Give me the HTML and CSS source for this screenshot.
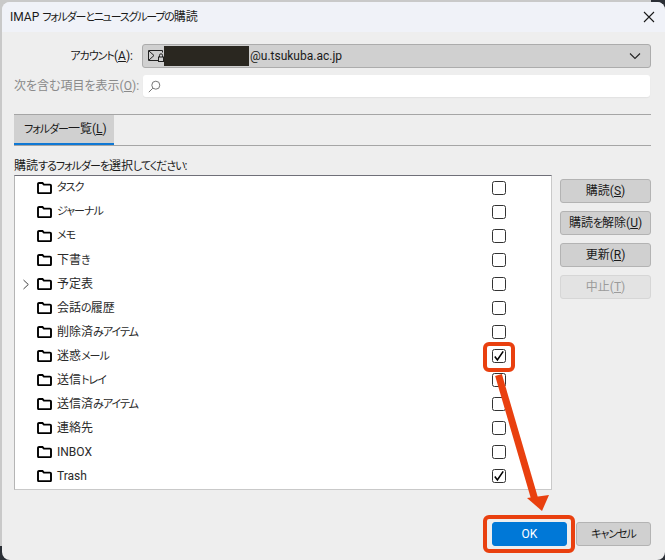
FILE: index.html
```html
<!DOCTYPE html>
<html lang="ja">
<head>
<meta charset="utf-8">
<title>IMAP フォルダーとニュースグループの購読</title>
<link rel="stylesheet" href="styles.css">
</head>
<body>
<svg class="defs" width="0" height="0">
  <symbol id="folder" viewBox="0 0 15 12"><path d="M1 10.200V2a1 1 0 0 1 1-1h3.500l1.400 1.600H13a1 1 0 0 1 1 1v6.600a1 1 0 0 1-1 1H2a1 1 0 0 1-1-1z" fill="none" stroke="#000" stroke-width="1.900"/></symbol>
  <symbol id="tick" viewBox="0 0 12 12"><path d="M1.800 6.600L4.400 10L10.200 1.400" stroke="#000" stroke-width="1.600" fill="none"/></symbol>
</svg>
<div class="corner corner-tr"></div>
<div class="corner corner-bl"></div>
<div class="corner corner-br"></div>
<div class="dialog">
  <header class="titlebar">
    <span class="title">IMAP <span class="k">フォルダーとニュースグループの</span>購読</span>
    <svg class="close" width="12" height="12" viewBox="0 0 12 12"><path d="M1 1L11 11M11 1L1 11" stroke="#1a1a1a" stroke-width="1.100" fill="none"/></svg>
  </header>
  <main class="content">
    <div class="field account-row">
      <label class="field-label"><span class="k">アカウント</span>(<u>A</u>):</label>
      <div class="combo">
        <svg class="acct-icon" width="16" height="14" viewBox="0 0 16 14"><path d="M.5 1.500h14v2M10 11.500H.5v-10M1 2l5 4.500L1 11" stroke="#222" fill="none"/><rect x="10.500" y="8" width="5" height="4.500" fill="none" stroke="#222"/><path d="M11.500 8V6.300a1.500 1.500 0 0 1 3 0V8" stroke="#222" fill="none"/></svg>
        <span class="redact"></span>
        <span class="combo-text">@u.tsukuba.ac.jp</span>
        <svg class="chev" width="12" height="8" viewBox="0 0 12 8"><path d="M1 1.500L6 6.500L11 1.500" stroke="#222" stroke-width="1.100" fill="none"/></svg>
      </div>
    </div>
    <div class="field filter-row">
      <label class="field-label muted">次を含む項目を表示(<u>O</u>):</label>
      <div class="search">
        <svg width="13" height="13" viewBox="0 0 13 13"><circle cx="7.800" cy="5.200" r="4" stroke="#777" fill="none"/><path d="M4.800 8.200L.8 12.200" stroke="#777" fill="none"/></svg>
      </div>
    </div>
    <div class="tabs"><div class="tab"><span class="k">フォルダー</span>一覧(<u>L</u>)</div></div>
    <p class="prompt">購読<span class="k">するフォルダーを</span>選択<span class="k">してください</span>:</p>
    <div class="panes">
      <div class="list">
        <div class="row"><span class="twisty"></span><svg class="folder"><use href="#folder"/></svg><span class="name k">タスク</span><span class="check"></span></div>
        <div class="row"><span class="twisty"></span><svg class="folder"><use href="#folder"/></svg><span class="name k">ジャーナル</span><span class="check"></span></div>
        <div class="row"><span class="twisty"></span><svg class="folder"><use href="#folder"/></svg><span class="name k">メモ</span><span class="check"></span></div>
        <div class="row"><span class="twisty"></span><svg class="folder"><use href="#folder"/></svg><span class="name">下書<span class="k">き</span></span><span class="check"></span></div>
        <div class="row"><span class="twisty"><svg width="8" height="11" viewBox="0 0 8 11"><path d="M1.500 1L6.300 5.500L1.500 10" stroke="#444" fill="none"/></svg></span><svg class="folder"><use href="#folder"/></svg><span class="name">予定表</span><span class="check"></span></div>
        <div class="row"><span class="twisty"></span><svg class="folder"><use href="#folder"/></svg><span class="name">会話<span class="k">の</span>履歴</span><span class="check"></span></div>
        <div class="row"><span class="twisty"></span><svg class="folder"><use href="#folder"/></svg><span class="name">削除済<span class="k">みアイテム</span></span><span class="check"></span></div>
        <div class="row"><span class="twisty"></span><svg class="folder"><use href="#folder"/></svg><span class="name">迷惑<span class="k">メール</span></span><span class="check"><svg width="12" height="12"><use href="#tick"/></svg></span></div>
        <div class="row"><span class="twisty"></span><svg class="folder"><use href="#folder"/></svg><span class="name">送信<span class="k">トレイ</span></span><span class="check"></span></div>
        <div class="row"><span class="twisty"></span><svg class="folder"><use href="#folder"/></svg><span class="name">送信済<span class="k">みアイテム</span></span><span class="check"></span></div>
        <div class="row"><span class="twisty"></span><svg class="folder"><use href="#folder"/></svg><span class="name">連絡先</span><span class="check"></span></div>
        <div class="row"><span class="twisty"></span><svg class="folder"><use href="#folder"/></svg><span class="name">INBOX</span><span class="check"></span></div>
        <div class="row"><span class="twisty"></span><svg class="folder"><use href="#folder"/></svg><span class="name">Trash</span><span class="check"><svg width="12" height="12"><use href="#tick"/></svg></span></div>
      </div>
      <div class="side">
        <button class="btn">購読(<u>S</u>)</button>
        <button class="btn">購読<span class="k">を</span>解除(<u>U</u>)</button>
        <button class="btn">更新(<u>R</u>)</button>
        <button class="btn disabled">中止(<u>T</u>)</button>
      </div>
    </div>
    <footer class="actions">
      <button class="btn primary">OK</button>
      <button class="btn"><span class="k">キャンセル</span></button>
    </footer>
  </main>
</div>
<svg class="annot" width="665" height="560" viewBox="0 0 665 560">
  <rect x="485" y="344" width="28" height="26" rx="4" fill="none" stroke="#e9400f" stroke-width="4"/>
  <rect x="485" y="517" width="88" height="34" rx="4" fill="none" stroke="#e9400f" stroke-width="4"/>
  <path d="M498.500 375L535 500" stroke="#e9400f" stroke-width="7" fill="none"/>
  <path d="M527 498L549 495L542 511Z" fill="#e9400f"/>
</svg>
</body>
</html>
```
FILE: styles.css
```css
* { box-sizing: border-box; }
html, body { margin: 0; height: 100%; }
body {
  position: relative;
  width: 665px;
  height: 560px;
  overflow: hidden;
  background: #c9c9c9;
  padding: 2px 0 0 2px;
  font-family: Roboto, "Noto Sans CJK JP", sans-serif;
  font-size: 12px;
  font-feature-settings: "palt";
  color: #1a1a1a;
}
.defs { position: absolute; }
.k { font-size: 11px; letter-spacing: -1px; }
.corner { position: absolute; background: #2b2f36; }
.corner-tr { top: 0; right: 0; width: 14px; height: 10px; }
.corner-bl { bottom: 0; left: 0; width: 14px; height: 14px; }
.corner-br { bottom: 0; right: 0; width: 14px; height: 14px; }
.dialog {
  position: relative;
  width: 663px;
  height: 558px;
  border-radius: 8px;
  background: #eeeeee;
  overflow: hidden;
}
.titlebar {
  height: 30px;
  padding: 0 9px 0 8px;
  background: #f0f2f8;
  display: flex;
  align-items: center;
  justify-content: space-between;
}
.title { font-size: 12px; line-height: 16px; }
.title .k { letter-spacing: -1.2px; }
.close { margin-right: 1px; }
.content { padding: 12px 14px 0 12px; }
.field { display: flex; align-items: center; }
.field-label { width: 119px; text-align: right; white-space: nowrap; line-height: 16px; flex: none; }
.muted { color: #8a8a8a; }
.account-row { height: 24px; }
.combo {
  margin-left: 9px;
  flex: 1;
  height: 24px;
  display: flex;
  align-items: center;
  padding: 0 9px 0 5px;
  background: #d0d0d0;
  border: 1px solid #acacac;
  border-radius: 3px;
}
.acct-icon { flex: none; }
.redact { width: 85px; height: 20px; background: #2a2720; flex: none; }
.combo-text { flex: 1; padding-left: 1px; }
.filter-row { height: 22px; margin-top: 7px; }
.search {
  margin: 0 1px 0 10px;
  flex: 1;
  height: 22px;
  padding: 0 5px;
  display: flex;
  align-items: center;
  background: #fff;
  border-radius: 3px;
  box-shadow: 0 1px 1px #e2e2e2;
}
.tabs { margin-top: 17px; height: 32px; border-top: 1px solid #a5a5a5; border-bottom: 1px solid #a5a5a5; }
.tab {
  width: 100px;
  height: 30px;
  background: #d0d0d0;
  border-bottom: 2px solid #0f78d4;
  padding-left: 10px;
  line-height: 28px;
  white-space: nowrap;
}
.prompt { margin: 12px 0 0; height: 16px; line-height: 16px; }
.panes { display: flex; margin-top: 1px; }
.list {
  width: 538px;
  height: 315px;
  background: #fff;
  border-top: 1px solid #6f6f78;
  border-left: 1px solid #b5b5b5;
  border-right: 1px solid #c9c9c9;
  border-bottom: 1px solid #c9c9c9;
}
.row { height: 24px; display: flex; align-items: center; }
.twisty { width: 22px; padding-left: 7px; display: flex; align-items: center; flex: none; }
.folder { width: 15px; height: 12px; flex: none; }
.name { margin-left: 5px; width: 435px; line-height: 16px; color: #2a2a2a; flex: none; }
.check {
  width: 14px;
  height: 14px;
  border: 1px solid #333;
  border-radius: 2.5px;
  display: flex;
  align-items: center;
  justify-content: center;
  flex: none;
  background: #fff;
}
.side { margin: 4px 0 0 8px; width: 91px; display: flex; flex-direction: column; gap: 8px; }
.btn {
  height: 24px;
  width: 91px;
  padding: 0;
  background: #d0d0d0;
  border: 1px solid #b3b3b3;
  border-radius: 3px;
  font: inherit;
  font-feature-settings: "palt";
  line-height: 16px;
  color: #1a1a1a;
}
.btn.disabled { background: #e3e3e3; border-color: #d6d6d6; color: #9b9b9b; }
.actions { display: flex; justify-content: flex-end; gap: 9px; margin-top: 32px; }
.btn.primary { width: 75px; background: #0078d7; border-color: #0078d7; color: #fff; }
.actions .btn:last-child { width: 75px; }
.annot { position: absolute; top: 0; left: 0; pointer-events: none; }
```
